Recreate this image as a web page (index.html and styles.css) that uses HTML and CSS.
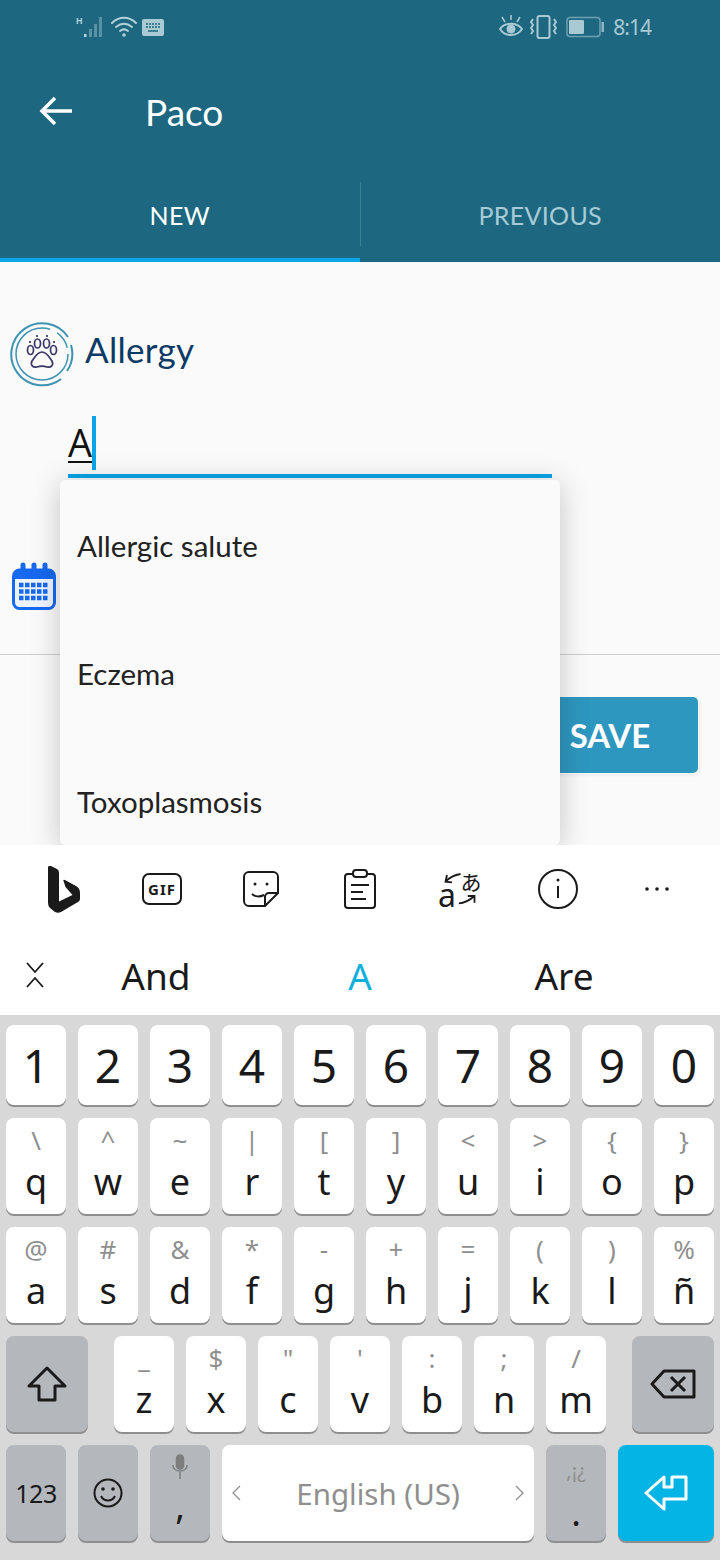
FILE: index.html
```html
<!DOCTYPE html>
<html lang="en">
<head>
  <meta charset="UTF-8">
  <meta name="viewport" content="width=device-width, initial-scale=1.0">
  <title>Paco</title>
  <link rel="stylesheet" href="styles.css">
</head>
<body>
  <header class="appbar">
    <div class="statusbar">
      <div class="status-left">
        <svg class="st-signal" width="30" height="22" viewBox="0 0 30 22">
          <text x="0" y="8" class="st-h">H</text>
          <rect x="8" y="18" width="2.500" height="3" fill="#b9d2da"/>
          <rect x="13" y="13" width="3" height="8" fill="#5a92a4"/>
          <rect x="18" y="8" width="3" height="13" fill="#5a92a4"/>
          <rect x="23" y="1" width="3" height="20" fill="#5a92a4"/>
        </svg>
        <svg width="26" height="22" viewBox="0 0 26 22" fill="none" stroke="#b5d0d9" stroke-width="2" stroke-linecap="round">
          <path d="M1 7c7-7 17-7 24 0"/>
          <path d="M5 11c5-4 11-4 16 0"/>
          <path d="M9 15c2.500-2 5.500-2 8 0"/>
          <circle cx="13" cy="19" r="1.800" fill="#b5d0d9" stroke="none"/>
        </svg>
        <svg width="22" height="17" viewBox="0 0 22 17">
          <rect width="22" height="17" rx="2" fill="#a9c9d3"/>
          <path d="M4 5h14M4 8h14" stroke="#1d6880" stroke-width="1.500" stroke-dasharray="2 1"/>
          <path d="M6 12h10" stroke="#1d6880" stroke-width="1.500"/>
        </svg>
      </div>
      <div class="status-right">
        <svg class="st-eye" width="24" height="24" viewBox="0 0 24 24" fill="none" stroke="#a9c9d3" stroke-width="2">
          <path d="M1 14c5-7 17-7 22 0-5 8-17 8-22 0z"/>
          <circle cx="12" cy="14" r="4.500" fill="#a9c9d3" stroke="none"/>
          <path d="M3 2l3 5M21 2l-3 5M12 0v5" stroke-width="1.500"/>
        </svg>
        <svg width="27" height="26" viewBox="0 0 27 26" fill="none" stroke="#a9c9d3" stroke-width="2">
          <rect x="7.500" y="2" width="12" height="22" rx="2"/>
          <path d="M3 5L1 8l2 3-2 3 2 3-2 3M24 5l2 3-2 3 2 3-2 3 2 3"/>
        </svg>
        <svg width="38" height="26" viewBox="0 0 38 26" fill="none">
          <rect x="1" y="3.500" width="33" height="19" rx="3" stroke="#6fa0b0" stroke-width="1.500"/>
          <rect x="3" y="6" width="15" height="14" rx="1" fill="#a9c9d3"/>
          <rect x="35.500" y="8" width="2.500" height="10" fill="#8db5c2"/>
        </svg>
        <span class="st-time">8:14</span>
      </div>
    </div>

    <div class="toolbar">
      <svg class="back" width="34" height="30" viewBox="0 0 34 30" fill="none" stroke="#fff" stroke-width="3.500">
        <path d="M16 2L3 15l13 13M3 15h30"/>
      </svg>
      <span class="title">Paco</span>
    </div>

    <div class="tabs">
      <div class="tab active">NEW</div>
      <div class="tab">PREVIOUS</div>
    </div>
  </header>

  <main class="form">
    <div class="section-title">
      <svg width="66" height="66" viewBox="0 0 66 66" fill="none">
        <path d="M52 58A31 31 0 1 1 59 16" stroke="#3d93b2" stroke-width="2"/>
        <path d="M62 24a31 31 0 0 1-4 26" stroke="#3d93b2" stroke-width="2"/>
        <circle cx="33" cy="33" r="26" stroke="#3d93b2" stroke-width="1.500" stroke-dasharray="130 8 18 8"/>
        <g stroke="#3b3668" stroke-width="1.700">
          <path d="M33 31c5 0 7 5 10 9 2 4-1 7-5 6-3-1-7-1-10 0-4 1-7-2-5-6 3-4 5-9 10-9z"/>
          <ellipse cx="21.500" cy="29" rx="3" ry="4.500"/>
          <ellipse cx="28.500" cy="22.500" rx="3" ry="4.500"/>
          <ellipse cx="37.500" cy="22.500" rx="3" ry="4.500"/>
          <ellipse cx="44.500" cy="29" rx="3" ry="4.500"/>
          <path d="M21 20v2M28 14v2M38 14v2M45 20v2"/>
        </g>
      </svg>
      <span class="section-label">Allergy</span>
    </div>

    <div class="field">
      <span class="field-value">A</span><span class="caret"></span>
    </div>

    <div class="date-row">
      <svg width="44" height="48" viewBox="0 0 44 48" fill="none">
        <rect x="1.500" y="8" width="41" height="38.500" rx="6" fill="#eef4fd" stroke="#1769f0" stroke-width="3"/>
        <path d="M1.500 14a6 6 0 0 1 6-6h29a6 6 0 0 1 6 6v3h-41z" fill="#1769f0"/>
        <path d="M11 3v7M22 3v7M33 3v7" stroke="#1769f0" stroke-width="5" stroke-linecap="round"/>
        <path d="M7 23h30M7 29.500h30M7 36h30" stroke="#1769f0" stroke-width="4.500" stroke-dasharray="4.500 1.500"/>
      </svg>
    </div>

    <div class="actions">
      <button class="save">SAVE</button>
    </div>

    <ul class="dropdown">
      <li>Allergic salute</li>
      <li>Eczema</li>
      <li>Toxoplasmosis</li>
    </ul>
  </main>

  <section class="kb-tools">
    <svg class="bing" width="34" height="47" viewBox="0 0 34 47">
      <path d="M1 2Q1-1 4 0l6 3q2 1 2 4v28.500L25.500 29l-7-8-2-6q-.5-2 1.500-1l11 6q4 2 4 7v6q0 2-2 3L14 46q-3 1.500-6 0l-5-4q-2-2-2-5z" fill="#1a1a1a"/>
    </svg>
    <svg width="40" height="32" viewBox="0 0 40 32" fill="none"><rect x="1" y="1" width="38" height="30" rx="6" stroke="#1a1a1a" stroke-width="2"/><text x="20" y="22" class="gif">GIF</text></svg>
    <svg width="36" height="36" viewBox="0 0 36 36" fill="none" stroke="#1a1a1a" stroke-width="2"><path d="M35 22V6a5 5 0 0 0-5-5H6a5 5 0 0 0-5 5v24a5 5 0 0 0 5 5h16z"/><path d="M35 22H26a4 4 0 0 0-4 4v9M9 23c3 3 8 3 12 1"/><circle cx="12" cy="13" r="1.500" fill="#1a1a1a" stroke="none"/><circle cx="24" cy="13" r="1.500" fill="#1a1a1a" stroke="none"/></svg>
    <svg width="32" height="40" viewBox="0 0 32 40" fill="none" stroke="#1a1a1a" stroke-width="2"><rect x="1" y="5" width="30" height="34" rx="3"/><rect x="9" y="1" width="14" height="7" rx="3" fill="#fff"/><path d="M7 16h18M7 23h12M7 30h15"/></svg>
    <svg class="translate" width="46" height="56" viewBox="0 -10 46 56" fill="none" stroke="#1a1a1a" stroke-width="1.800"><path d="M22.500 3C16 4 11 7 7.500 10.700M9 4l-1.500 6.700 6.500.6M20.800 32.300C27 32 32 29 36.500 25M29.800 25h6.700v6.700"/><text x="33" y="19" class="jp">あ</text><text x="0" y="36" class="latin-a">a</text></svg>
    <svg width="40" height="40" viewBox="0 0 40 40" fill="none" stroke="#1a1a1a" stroke-width="2"><circle cx="20" cy="20" r="19"/><path d="M20 17v12"/><circle cx="20" cy="11" r="1.500" fill="#1a1a1a" stroke="none"/></svg>
    <svg width="26" height="6" viewBox="0 0 26 6" fill="#1a1a1a"><circle cx="3" cy="3" r="1.800"/><circle cx="13" cy="3" r="1.800"/><circle cx="23" cy="3" r="1.800"/></svg>
  </section>

  <section class="kb-suggest">
    <svg class="collapse" width="20" height="28" viewBox="0 0 20 28" fill="none" stroke="#1a1a1a" stroke-width="1.800"><path d="M2 2l8 9 8-9M2 26l8-9 8 9"/></svg>
    <span class="word">And</span>
    <span class="word current">A</span>
    <span class="word">Are</span>
  </section>

  <section class="keyboard">
    <div class="kb-row digits">
      <div class="key">1</div><div class="key">2</div><div class="key">3</div><div class="key">4</div><div class="key">5</div>
      <div class="key">6</div><div class="key">7</div><div class="key">8</div><div class="key">9</div><div class="key">0</div>
    </div>
    <div class="kb-row">
      <div class="key"><span class="hint">\</span><span class="ch">q</span></div>
      <div class="key"><span class="hint">^</span><span class="ch">w</span></div>
      <div class="key"><span class="hint">~</span><span class="ch">e</span></div>
      <div class="key"><span class="hint">|</span><span class="ch">r</span></div>
      <div class="key"><span class="hint">[</span><span class="ch">t</span></div>
      <div class="key"><span class="hint">]</span><span class="ch">y</span></div>
      <div class="key"><span class="hint">&lt;</span><span class="ch">u</span></div>
      <div class="key"><span class="hint">&gt;</span><span class="ch">i</span></div>
      <div class="key"><span class="hint">{</span><span class="ch">o</span></div>
      <div class="key"><span class="hint">}</span><span class="ch">p</span></div>
    </div>
    <div class="kb-row">
      <div class="key"><span class="hint">@</span><span class="ch">a</span></div>
      <div class="key"><span class="hint">#</span><span class="ch">s</span></div>
      <div class="key"><span class="hint">&amp;</span><span class="ch">d</span></div>
      <div class="key"><span class="hint">*</span><span class="ch">f</span></div>
      <div class="key"><span class="hint">-</span><span class="ch">g</span></div>
      <div class="key"><span class="hint">+</span><span class="ch">h</span></div>
      <div class="key"><span class="hint">=</span><span class="ch">j</span></div>
      <div class="key"><span class="hint">(</span><span class="ch">k</span></div>
      <div class="key"><span class="hint">)</span><span class="ch">l</span></div>
      <div class="key"><span class="hint">%</span><span class="ch">ñ</span></div>
    </div>
    <div class="kb-row">
      <div class="key wide fn shift">
        <svg width="40" height="36" viewBox="0 0 40 36" fill="none" stroke="#1a1a1a" stroke-width="3"><path d="M20 2L2 20h10v14h16V20h10z" stroke-linejoin="round"/></svg>
      </div>
      <div class="key"><span class="hint">_</span><span class="ch">z</span></div>
      <div class="key"><span class="hint">$</span><span class="ch">x</span></div>
      <div class="key"><span class="hint">"</span><span class="ch">c</span></div>
      <div class="key"><span class="hint">'</span><span class="ch">v</span></div>
      <div class="key"><span class="hint">:</span><span class="ch">b</span></div>
      <div class="key"><span class="hint">;</span><span class="ch">n</span></div>
      <div class="key"><span class="hint">/</span><span class="ch">m</span></div>
      <div class="key wide fn backspace">
        <svg width="46" height="30" viewBox="0 0 46 30" fill="none" stroke="#1a1a1a" stroke-width="3"><path d="M44 2H14L2 15l12 13h30z" stroke-linejoin="round"/><path d="M21 8l14 14M35 8L21 22"/></svg>
      </div>
    </div>
    <div class="kb-row">
      <div class="key fn label">123</div>
      <div class="key fn">
        <svg width="30" height="30" viewBox="0 0 30 30" fill="none" stroke="#1a1a1a" stroke-width="2"><circle cx="15" cy="15" r="13.500"/><path d="M8 18c3 6 11 6 14 0"/><circle cx="10" cy="11" r="1.800" fill="#1a1a1a" stroke="none"/><circle cx="20" cy="11" r="1.800" fill="#1a1a1a" stroke="none"/></svg>
      </div>
      <div class="key fn mic">
        <svg width="16" height="25" viewBox="0 0 16 25" fill="none" stroke="#7d7d7d" stroke-width="1.500"><rect x="4.500" y="1" width="7" height="14" rx="3.500" fill="#7d7d7d"/><path d="M1 11c0 8 14 8 14 0M8 18v7"/></svg>
        <span class="ch">,</span>
      </div>
      <div class="key space">
        <svg width="10" height="16" viewBox="0 0 10 16" fill="none" stroke="#8f8f8f" stroke-width="1.300"><path d="M9 1L2 8l7 7"/></svg>
        <span class="lang">English (US)</span>
        <svg width="10" height="16" viewBox="0 0 10 16" fill="none" stroke="#8f8f8f" stroke-width="1.300"><path d="M1 1l7 7-7 7"/></svg>
      </div>
      <div class="key fn period"><span class="hint small">,¡¿</span><span class="ch">.</span></div>
      <div class="key enter">
        <svg width="44" height="36" viewBox="0 0 44 36" fill="none" stroke="#fff" stroke-width="3"><path d="M20 2L2 18l18 16V24h22V2H28v10h-8z" stroke-linejoin="round"/></svg>
      </div>
    </div>
  </section>
</body>
</html>
```

FILE: styles.css
```css
* { box-sizing: border-box; }
body { margin: 0; width: 720px; height: 1560px; overflow: hidden; background: #fafafa; font-family: "Noto Sans", sans-serif; color: #1a1a1a; }

.appbar { background: #1d6880; height: 262px; color: #fff; font-family: Lato, sans-serif; }
.statusbar { height: 58px; display: flex; justify-content: space-between; align-items: center; padding: 0 69px 4px 76px; }
.status-left, .status-right { display: flex; align-items: center; }
.status-left { gap: 5px; }
.status-right { gap: 9px; }
.st-eye { margin-right: -2px; }
.st-h { font: 700 9px "Liberation Sans", sans-serif; fill: #b5d0d9; }
.st-time { font: 21px "Noto Sans", sans-serif; color: #a9c9d3; letter-spacing: -1px; }

.toolbar { height: 112px; display: flex; align-items: center; padding: 0 0 6px 39px; }
.title { margin-left: 72px; font-size: 37px; line-height: 40px; margin-top: 2px; }

.tabs { height: 92px; display: flex; padding-top: 12px; }
.tab { flex: 1; height: 80px; display: flex; align-items: center; justify-content: center; font-size: 25px; letter-spacing: 0.3px; padding-bottom: 14px; color: #a6cbd6; }
.tab.active { color: #fff; border-bottom: 4px solid #0aa5e8; padding-bottom: 10px; }
.tab + .tab { border-left: 1px solid #3f7f94; height: 64px; padding-bottom: 0; padding-top: 2px; }

.form { position: relative; height: 583px; font-family: Lato, sans-serif; }
.section-title { display: flex; align-items: center; gap: 10px; padding: 59px 0 0 9px; height: 125px; }
.section-label { font-size: 35px; letter-spacing: 0.3px; color: #0c3a66; margin-bottom: 10px; }
.field { width: 484px; height: 62px; margin: 29px 0 0 68px; border-bottom: 4px solid #0aa5e8; display: flex; }
.field-value { font: 38px/52px "Open Sans", sans-serif; color: #111; text-decoration: underline; text-decoration-thickness: 2px; text-underline-offset: 4px; height: 54px; }
.caret { width: 4px; height: 54px; background: #0aa5e8; }
.date-row { height: 177px; padding: 84px 0 0 12px; border-bottom: 1px solid #cfcfcf; }
.actions { display: flex; justify-content: flex-end; padding: 42px 22px 0 0; }
.save { width: 176px; height: 76px; padding: 0; border: none; border-radius: 5px; background: #2e97c0; color: #fff; font: 700 33px Lato, sans-serif; box-shadow: 1px 1px 1px #fff, 2px 2px 3px rgba(0,0,0,0.08); }

.dropdown { position: absolute; left: 60px; top: 218px; width: 500px; height: 365px; margin: 0; padding: 0; list-style: none; background: #fafafa; border-radius: 5px; box-shadow: 0 4px 30px rgba(0,0,0,0.22); }
.dropdown li { height: 128px; display: flex; align-items: center; padding: 2px 0 0 17px; font-size: 29.500px; color: #222; }

/* keyboard sits on top of the dropdown's shadow */
.kb-tools { position: relative; height: 100px; background: #fff; display: grid; grid-template-columns: repeat(7, 99px); padding: 0 0 12px 13px; justify-items: center; align-items: center; }
.bing { margin-left: 2px; }
.translate { margin-left: 4px; }
.gif { font: 700 15px "Noto Sans", sans-serif; fill: #1a1a1a; text-anchor: middle; letter-spacing: 1px; }
.jp { font: 21px "Noto Sans CJK JP", sans-serif; fill: #1a1a1a; stroke: none; text-anchor: middle; }
.latin-a { font: 32px "Noto Sans", sans-serif; fill: #1a1a1a; stroke: none; }

.kb-suggest { height: 70px; background: #fff; display: grid; grid-template-columns: 54px 204px 204px 204px; align-items: center; padding-bottom: 10px; }
.collapse { margin-left: 25px; }
.word { text-align: center; font-size: 37px; color: #1a1a1a; }
.word.current { color: #0fb0dc; }

.keyboard { height: 545px; background: #d8d8d8; padding: 10px 6px 0; display: flex; flex-direction: column; gap: 13px; }
.kb-row { display: flex; gap: 12px; }
.key { width: 60px; height: 96px; background: #fff; border-radius: 8px; box-shadow: 0 2px 0 #8e8e8e; display: flex; flex-direction: column; align-items: center; }
.digits .key { height: 80px; justify-content: center; font-size: 46px; line-height: 1; }
.hint { height: 42px; line-height: 44px; font-size: 26px; color: #8f8f8f; }
.ch { font-size: 36px; line-height: 44px; color: #1a1a1a; }
.fn { background: #b4b7bb; justify-content: center; }
.wide { width: 82px; }
.shift { margin-right: 14px; }
.backspace { margin-left: 14px; }
.label { font-size: 25px; letter-spacing: -0.5px; }
.mic { justify-content: flex-start; padding-top: 9px; }
.mic .ch { line-height: 54px; }
.space { width: 312px; flex-direction: row; justify-content: space-between; align-items: center; padding: 0 9px; color: #8f8f8f; }
.lang { font-size: 29.500px; }
.period { justify-content: flex-start; padding-top: 4px; }
.hint.small { font-size: 20px; }
.enter { width: 96px; background: #03b4e4; justify-content: center; }
```
